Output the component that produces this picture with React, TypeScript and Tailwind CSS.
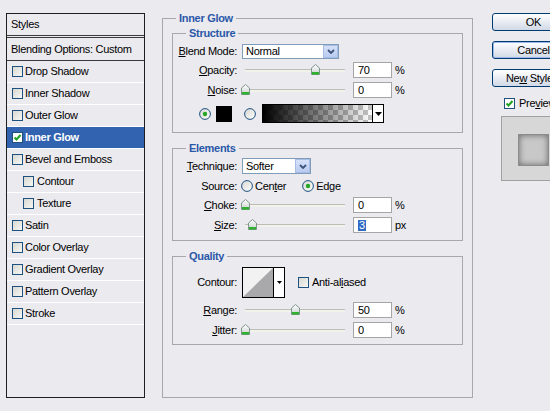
import React from "react";

interface Layer {
  name: string;
  on?: boolean;
  sub?: boolean;
}

const layers: Array<Layer> = [
  { name: "Drop Shadow" },
  { name: "Inner Shadow" },
  { name: "Outer Glow" },
  { name: "Inner Glow", on: true },
  { name: "Bevel and Emboss" },
  { name: "Contour", sub: true },
  { name: "Texture", sub: true },
  { name: "Satin" },
  { name: "Color Overlay" },
  { name: "Gradient Overlay" },
  { name: "Pattern Overlay" },
  { name: "Stroke" },
];

const Check = ({ on = false }: { on?: boolean }) => (
  <div
    className={
      "w-[11px] h-[11px] shrink-0 border border-[#1c5180] flex items-center justify-center " +
      (on ? "bg-white" : "bg-linear-to-br from-[#d8d8d2] to-[#f6f6f4]")
    }
  >
    {on && (
      <svg width="9" height="9" viewBox="0 0 9 9">
        <path d="M1.5 4.5 L3.5 6.5 L7.5 2" stroke="#21a121" strokeWidth="2" fill="none" />
      </svg>
    )}
  </div>
);

const Radio = ({ on = false }: { on?: boolean }) => (
  <svg width="12" height="12" viewBox="0 0 12 12" className="shrink-0">
    <defs>
      <linearGradient id="rg" x1="0" y1="0" x2="1" y2="1">
        <stop offset="0" stopColor="#d6d6d0" />
        <stop offset="1" stopColor="#ffffff" />
      </linearGradient>
    </defs>
    <circle cx="6" cy="6" r="5.4" fill="url(#rg)" stroke="#1c5180" strokeWidth="1" />
    {on && <circle cx="6" cy="6" r="2.2" fill="#24a824" />}
  </svg>
);

const Thumb = () => (
  <svg width="9" height="11" viewBox="0 0 9 11">
    <defs>
      <linearGradient id="tg" x1="0" y1="0" x2="0" y2="1">
        <stop offset="0" stopColor="#ffffff" />
        <stop offset="1" stopColor="#c8d0cc" />
      </linearGradient>
    </defs>
    <path d="M0.5 4 L4.5 0.5 L8.5 4 L8.5 10.5 L0.5 10.5 Z" fill="url(#tg)" stroke="#7f9590" strokeWidth="1" />
    <rect x="1" y="8" width="7" height="2.5" fill="#2fb02f" />
  </svg>
);

// pos is 0..100 along the track
const Slider = ({ pos }: { pos: number }) => (
  <div className="relative ml-[3px] w-[109px] h-full shrink-0 flex items-center">
    <div className="ml-[5px] w-[100px] h-[3px] bg-[#f2f2ec] border-t border-[#bdbdb5]"></div>
    <div className="absolute top-[2px]" style={{ left: 5 + pos - 4.5 }}>
      <Thumb />
    </div>
  </div>
);

const NumBox = ({ children }: { children: React.ReactNode }) => (
  <div className="ml-[4px] w-[39px] h-[16px] shrink-0 border border-[#a5a5a5] bg-white pl-[4px] flex items-center leading-none">
    {children}
  </div>
);

const Chevron = () => (
  <svg width="8" height="5" viewBox="0 0 8 5">
    <path d="M1 1 L4 4 L7 1" stroke="#3d5278" strokeWidth="1.8" fill="none" />
  </svg>
);

const Select = ({ value, width }: { value: string; width: string }) => (
  <div className={"ml-[5px] h-full shrink-0 border border-[#7f9db9] bg-white flex " + width}>
    <div className="flex-1 pl-[3px] flex items-center">{value}</div>
    <div className="w-[15px] h-full bg-linear-to-b from-[#d6e1f8] to-[#b9cbf1] border border-[#a9bce6] flex items-center justify-center">
      <Chevron />
    </div>
  </div>
);

const Label = ({ children }: { children: React.ReactNode }) => (
  <div className="w-[64px] shrink-0 text-right whitespace-nowrap">{children}</div>
);

const Btn = ({ children, ring = false }: { children: React.ReactNode; ring?: boolean }) => (
  <div
    className={
      "w-[83px] h-[18px] border border-[#003c74] rounded-[3px] bg-linear-to-b from-white to-[#d2d9e6] flex items-center justify-center " +
      (ring ? "shadow-[inset_0_0_0_1px_#9cb8e6]" : "")
    }
  >
    {children}
  </div>
);

const Legend = ({ children, inner = false }: { children: React.ReactNode; inner?: boolean }) => (
  <legend className={"px-[3px] leading-[13px] font-bold text-[#2a58a8] " + (inner ? "ml-[13px]" : "ml-[4px]")}>
    {children}
  </legend>
);

export default function App() {
  return (
    <div className="w-[550px] h-[411px] overflow-hidden bg-[#ebeaef] flex items-start text-[11px] tracking-[-0.3px] text-black font-['Liberation_Sans',Arial,sans-serif]">
      {/* styles list */}
      <div className="ml-[6px] mt-[13px] w-[139px] h-[385px] shrink-0 border border-[#1e1e1e] flex flex-col">
        <div className="h-[22px] border-b border-[#3a3a3a] pl-[4px] flex items-center">Styles</div>
        <div className="h-[1px]"></div>
        <div className="h-[24px] border-t border-b border-[#3a3a3a] pl-[4px] flex items-center">
          Blending Options: Custom
        </div>
        {layers.map((l) => (
          <div
            key={l.name}
            className={
              "h-[22px] border-b border-white flex items-center gap-[2px] " +
              (l.sub ? "pl-[16px] " : "pl-[5px] ") +
              (l.on ? "bg-[#3163b0] text-white font-bold" : "")
            }
          >
            <Check on={l.on} />
            <span className={l.sub ? "ml-[1px]" : ""}>{l.name}</span>
          </div>
        ))}
      </div>

      {/* settings */}
      <fieldset className="ml-[17px] mt-[12px] w-[311px] h-[386px] shrink-0 border border-[#a8a8ac] px-[9px]">
        <Legend>Inner Glow</Legend>

        <fieldset className="mt-[2px] border border-[#a8a8ac] pb-[9px]">
          <Legend inner>Structure</Legend>
          <div className="mt-[4px] h-[15px] flex items-center">
            <Label>
              <u>B</u>lend Mode:
            </Label>
            <Select value="Normal" width="w-[97px]" />
          </div>
          <div className="mt-[3px] h-[16px] flex items-center">
            <Label>
              <u>O</u>pacity:
            </Label>
            <Slider pos={70} />
            <NumBox>70</NumBox>
            <span className="ml-[3px]">%</span>
          </div>
          <div className="mt-[4px] h-[16px] flex items-center">
            <Label>
              <u>N</u>oise:
            </Label>
            <Slider pos={0} />
            <NumBox>0</NumBox>
            <span className="ml-[3px]">%</span>
          </div>
          <div className="mt-[6px] h-[19px] flex items-center">
            <div className="ml-[26px]">
              <Radio on />
            </div>
            <div className="ml-[5px] w-[16px] h-[16px] bg-black"></div>
            <div className="ml-[12px]">
              <Radio />
            </div>
            <div className="ml-[6px] w-[122px] h-[19px] border border-black flex">
              <div className="flex-1 bg-[image:repeating-conic-gradient(#c4c4c4_0%_25%,#ffffff_0%_50%)] bg-[length:10px_10px]">
                <div className="h-full bg-linear-to-r from-black to-transparent"></div>
              </div>
              <div className="w-[11px] border-l border-black bg-white flex items-center justify-center">
                <svg width="7" height="4" viewBox="0 0 7 4">
                  <path d="M0 0 H7 L3.5 4 Z" fill="#000" />
                </svg>
              </div>
            </div>
          </div>
        </fieldset>

        <fieldset className="mt-[9px] border border-[#a8a8ac] pb-[7px]">
          <Legend inner>Elements</Legend>
          <div className="mt-[3px] h-[16px] flex items-center">
            <Label>
              <u>T</u>echnique:
            </Label>
            <Select value="Softer" width="w-[69px]" />
          </div>
          <div className="mt-[4px] h-[16px] flex items-center">
            <Label>Source:</Label>
            <div className="ml-[4px]">
              <Radio />
            </div>
            <span className="ml-[2px]">
              Cen<u>t</u>er
            </span>
            <div className="ml-[16px]">
              <Radio on />
            </div>
            <span className="ml-[2px]">
              Ed<u>g</u>e
            </span>
          </div>
          <div className="mt-[3px] h-[16px] flex items-center">
            <Label>
              <u>C</u>hoke:
            </Label>
            <Slider pos={0} />
            <NumBox>0</NumBox>
            <span className="ml-[3px]">%</span>
          </div>
          <div className="mt-[4px] h-[16px] flex items-center">
            <Label>
              <u>S</u>ize:
            </Label>
            <Slider pos={7} />
            <NumBox>
              <span className="bg-[#316ac5] text-white px-[1px]">3</span>
            </NumBox>
            <span className="ml-[3px]">px</span>
          </div>
        </fieldset>

        <fieldset className="mt-[9px] border border-[#a8a8ac] pb-[6px]">
          <Legend inner>Quality</Legend>
          <div className="mt-[4px] h-[31px] flex items-center">
            <Label>Contour:</Label>
            <div className="ml-[5px] w-[43px] h-[31px] border border-black bg-white flex">
              <svg width="30" height="29" viewBox="0 0 30 29" className="shrink-0">
                <rect width="30" height="29" fill="#f2f2f2" />
                <path d="M0 29 L30 0 L30 29 Z" fill="#a9a9ab" />
              </svg>
              <div className="flex-1 border-l border-black flex items-center justify-center">
                <svg width="5" height="3" viewBox="0 0 5 3">
                  <path d="M0 0 H5 L2.5 3 Z" fill="#000" />
                </svg>
              </div>
            </div>
            <div className="ml-[13px]">
              <Check />
            </div>
            <span className="ml-[3px]">
              Anti-al<u>i</u>ased
            </span>
          </div>
          <div className="mt-[4px] h-[16px] flex items-center">
            <Label>
              <u>R</u>ange:
            </Label>
            <Slider pos={50} />
            <NumBox>50</NumBox>
            <span className="ml-[3px]">%</span>
          </div>
          <div className="mt-[4px] h-[16px] flex items-center">
            <Label>
              <u>J</u>itter:
            </Label>
            <Slider pos={0} />
            <NumBox>0</NumBox>
            <span className="ml-[3px]">%</span>
          </div>
        </fieldset>
      </fieldset>

      {/* buttons */}
      <div className="ml-[19px] w-[90px] shrink-0 flex flex-col">
        <div className="mt-[13px]">
          <Btn>OK</Btn>
        </div>
        <div className="mt-[10px]">
          <Btn ring>Cancel</Btn>
        </div>
        <div className="mt-[10px]">
          <Btn>
            Ne<u>w</u>&nbsp;Style...
          </Btn>
        </div>
        <div className="mt-[10px] h-[12px] flex items-center">
          <div className="ml-[12px]">
            <Check on />
          </div>
          <span className="ml-[4px]">
            Pre<u>v</u>iew
          </span>
        </div>
        <div className="mt-[7px] ml-[9px] w-[80px] h-[65px] border border-[#a0a0a0] bg-[#d7d7d7] pl-[16px] pt-[17px]">
          <div className="w-[31px] h-[32px] border border-[#8c8c8c] bg-[#c8c8c8] shadow-[inset_0_0_6px_#666666]"></div>
        </div>
      </div>
    </div>
  );
}
